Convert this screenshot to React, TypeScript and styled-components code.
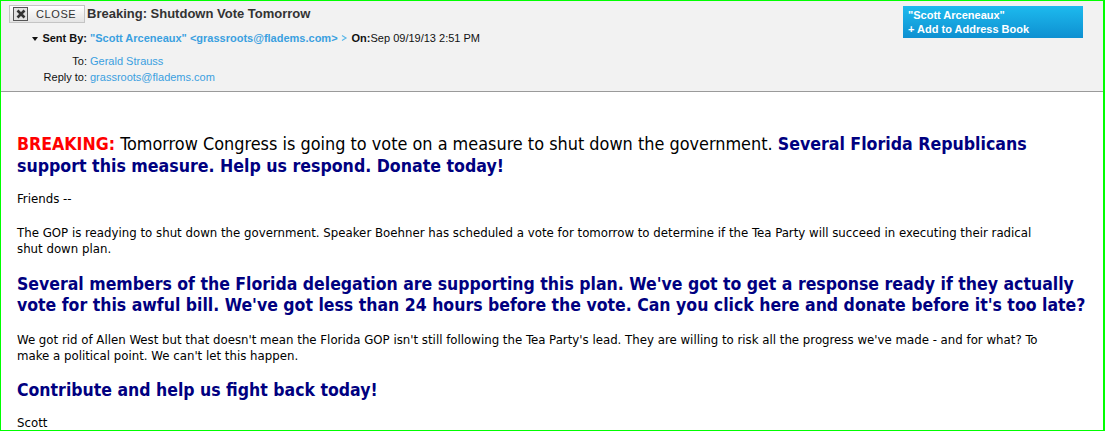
import styled, { createGlobalStyle } from "styled-components";

const GlobalStyle = createGlobalStyle`
  html, body {
    margin: 0;
    padding: 0;
    background: #ffffff;
  }
  * {
    box-sizing: border-box;
  }
`;

const Frame = styled.div`
  width: 1105px;
  height: 431px;
  border: 1px solid #00ff00;
  border-right-width: 2px;
  overflow: hidden;
  background: #ffffff;
`;

const Header = styled.div`
  height: 91px;
  background: #f2f2f2;
  border-bottom: 1px solid #9a9a9a;
  display: flex;
  justify-content: space-between;
  font-family: "Liberation Sans", Arial, sans-serif;
  font-size: 11px;
  color: #111;
`;

const HeaderLeft = styled.div`
  display: flex;
  flex-direction: column;
  padding: 4px 0 0 8px;
`;

const TitleRow = styled.div`
  display: flex;
  align-items: center;
  gap: 2px;
  height: 18px;
`;

const CloseButton = styled.button`
  display: flex;
  align-items: center;
  gap: 8px;
  width: 76px;
  height: 18px;
  padding: 0 0 0 3px;
  border: 1px solid #c4c4c4;
  background: linear-gradient(#ffffff, #e4e4e4);
  font-family: "Liberation Sans", Arial, sans-serif;
  font-size: 11px;
  letter-spacing: 0.6px;
  color: #333;
  cursor: pointer;
`;

const CloseIcon = styled.span`
  display: flex;
  align-items: center;
  justify-content: center;
  width: 15px;
  height: 14px;
  border: 1px solid #555;
  background: #e2e2e2;
`;

const Title = styled.span`
  font-size: 13px;
  font-weight: bold;
  color: #333;
  margin-top: -1px;
`;

const MetaGrid = styled.div`
  display: grid;
  grid-template-columns: 9px 45px auto;
  grid-template-rows: 16px 23px 16px;
  column-gap: 3px;
  align-items: end;
  margin: 7px 0 0 21px;
`;

const Caret = styled.span`
  align-self: center;
  justify-self: end;
  width: 0;
  height: 0;
  border-left: 3.5px solid transparent;
  border-right: 3.5px solid transparent;
  border-top: 4px solid #111;
  margin: 1px 1px 0 0;
`;

const Label = styled.span<{ $bold?: boolean }>`
  justify-self: end;
  display: flex;
  align-items: center;
  height: 16px;
  font-weight: ${({ $bold }) => ($bold ? "bold" : "normal")};
  white-space: nowrap;
`;

const Value = styled.span`
  display: flex;
  align-items: center;
  white-space: nowrap;
  height: 16px;
`;

const Link = styled.a<{ $bold?: boolean }>`
  color: #3aa0e0;
  text-decoration: none;
  font-weight: ${({ $bold }) => ($bold ? "bold" : "normal")};
`;

const OnLabel = styled.b`
  margin-left: 3px;
`;

const AddressBox = styled.div`
  align-self: flex-start;
  margin: 5px 20px 0 0;
  width: 180px;
  height: 32px;
  padding: 2px 5px;
  background: linear-gradient(#1dbaee, #0e90d1);
  color: #ffffff;
  font-weight: bold;
  font-size: 11px;
  line-height: 14px;
`;

const Body = styled.div`
  display: flex;
  flex-direction: column;
  padding: 41px 0 0 16px;
  font-family: "DejaVu Sans Condensed", "DejaVu Sans", Tahoma, sans-serif;
  font-stretch: condensed;
  color: #000;
`;

const Lead = styled.p`
  margin: 0;
  font-size: 17.9px;
  line-height: 21px;
  white-space: nowrap;
`;

const Red = styled.b`
  color: #ff0000;
  font-size: 17.6px;
`;

const Navy = styled.b`
  color: #000080;
  font-size: 17.6px;
`;

const Para = styled.p<{ $top: number }>`
  margin: ${({ $top }) => $top}px 0 0;
  font-size: 13.1px;
  line-height: 16.5px;
  white-space: nowrap;
`;

const Heading = styled.p<{ $top: number }>`
  margin: ${({ $top }) => $top}px 0 0;
  font-size: 17.5px;
  line-height: 21px;
  font-weight: bold;
  color: #000080;
  white-space: nowrap;
`;

export default function App() {
  return (
    <>
      <GlobalStyle />
      <Frame>
        <Header>
          <HeaderLeft>
            <TitleRow>
              <CloseButton>
                <CloseIcon>
                  <svg width="10" height="10" viewBox="0 0 10 10">
                    <path d="M1.5 1.5 L8.5 8.5 M8.5 1.5 L1.5 8.5" stroke="#333" strokeWidth="2.6" />
                  </svg>
                </CloseIcon>
                CLOSE
              </CloseButton>
              <Title>Breaking: Shutdown Vote Tomorrow</Title>
            </TitleRow>
            <MetaGrid>
              <Caret />
              <Label $bold>Sent By:</Label>
              <Value>
                <Link $bold>"Scott Arceneaux" &lt;grassroots@fladems.com&gt;</Link>
                <svg width="9" height="8" viewBox="0 0 9 8" style={{ marginLeft: 2 }}>
                  <path d="M2 1.5 L6 4 L2 6.5" fill="none" stroke="#5cb8e8" strokeWidth="1.2" />
                </svg>
                <OnLabel>On:</OnLabel>Sep 09/19/13 2:51 PM
              </Value>
              <span />
              <Label>To:</Label>
              <Value>
                <Link>Gerald Strauss</Link>
              </Value>
              <span />
              <Label>Reply to:</Label>
              <Value>
                <Link>grassroots@fladems.com</Link>
              </Value>
            </MetaGrid>
          </HeaderLeft>
          <AddressBox>
            "Scott Arceneaux"
            <br />+ Add to Address Book
          </AddressBox>
        </Header>
        <Body>
          <Lead>
            <Red>BREAKING:</Red> Tomorrow Congress is going to vote on a measure to shut down the government.{" "}
            <Navy>Several Florida Republicans</Navy>
            <br />
            <Navy>support this measure. Help us respond. Donate today!</Navy>
          </Lead>
          <Para $top={14}>Friends --</Para>
          <Para $top={17}>
            The GOP is readying to shut down the government. Speaker Boehner has scheduled a vote for tomorrow to
            determine if the Tea Party will succeed in executing their radical
            <br />
            shut down plan.
          </Para>
          <Heading $top={16}>
            Several members of the Florida delegation are supporting this plan. We've got to get a response ready if
            they actually
            <br />
            vote for this awful bill. We've got less than 24 hours before the vote. Can you click here and donate
            before it's too late?
          </Heading>
          <Para $top={16}>
            We got rid of Allen West but that doesn't mean the Florida GOP isn't still following the Tea Party's lead.
            They are willing to risk all the progress we've made - and for what? To
            <br />
            make a political point. We can't let this happen.
          </Para>
          <Heading $top={15}>Contribute and help us fight back today!</Heading>
          <Para $top={14}>Scott</Para>
        </Body>
      </Frame>
    </>
  );
}
